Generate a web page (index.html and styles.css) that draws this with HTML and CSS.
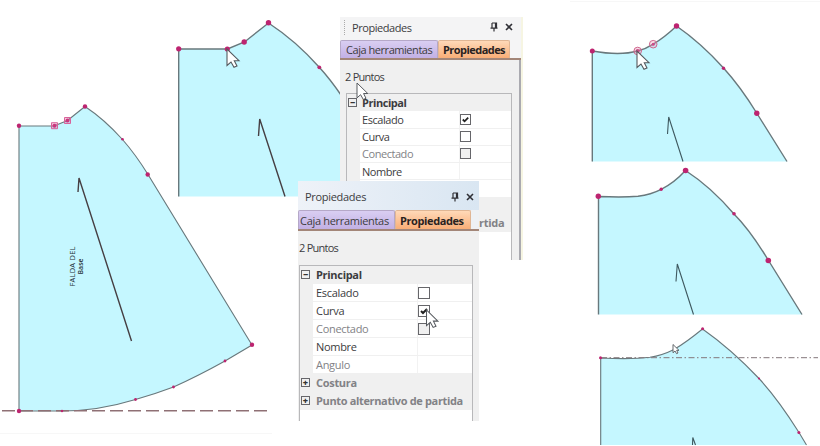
FILE: index.html
```html
<!DOCTYPE html>
<html lang="es">
<head>
<meta charset="utf-8">
<title>Propiedades</title>
<link rel="stylesheet" href="styles.css">
</head>
<body>
<main class="canvas">
  <svg class="drawing" viewBox="0 0 820 446">
    <!-- full skirt piece -->
    <path class="haze" d="M0 433.500H272M570 1.500H820"/>
    <path class="piece" d="M19 126H54L67.500 120.500L85 106.500Q104 119 122.500 139.500Q136 155 148 174.500L252 345L225 361Q198 376 173.500 387Q155 394 135.500 399.500Q98 411 62 411H19Z"/>
    <path class="baseline" d="M2 410.700H272"/>
    <path class="grain" d="M78 192L79 178L131.500 341"/>
    <g class="dots">
      <circle cx="19" cy="125.700" r="2.200"/><circle cx="85" cy="106.500" r="2.200"/><circle cx="122.500" cy="139.200" r="1.300"/><circle cx="147.700" cy="174.500" r="2.200"/><circle cx="252" cy="344.700" r="2.200"/><circle cx="225" cy="361" r="1.400"/><circle cx="173.500" cy="387" r="1.400"/><circle cx="135.500" cy="399.500" r="1.400"/><circle cx="62" cy="411" r="1.200"/><circle cx="19" cy="411" r="2.200"/><circle cx="54.500" cy="125.700" r="2"/><circle cx="67.500" cy="120.500" r="2"/>
    </g>
    <path class="selection" d="M51.500 122.700h6v6h-6zM64.500 117.500h6v6h-6z"/>
    <text class="label" transform="translate(75.300 286.500) rotate(-90)" textLength="40">FALDA DEL</text>
    <text class="label label-bold" transform="translate(83 274.500) rotate(-90)" textLength="16">Base</text>

    <!-- close-up with corner points -->
    <path class="fill" d="M178.500 49H227L244.500 42L268.500 23Q296 41 319.500 67.500Q330 79 340 94V196.500H178.500Z"/>
    <path class="edge edge-thick" d="M178.700 196.500V49H227.500L244.500 42L268.500 23Q296 41 319.500 67.500Q330 79 341 95"/>
    <path class="grain" d="M258.500 136L259.700 119L285 196.500"/>
    <g class="dots">
      <circle cx="178.700" cy="48.800" r="2.600"/><circle cx="227.300" cy="49" r="2.600"/><circle cx="244.200" cy="42" r="2.700"/><circle cx="268.500" cy="22.800" r="2.700"/><circle cx="319.300" cy="67.300" r="1.900"/>
    </g>

    <!-- close-up with curve points selected -->
    <path class="fill" d="M592 51Q620 56 637.500 51Q646 49 653.200 44.200Q665 37 676.500 26Q701 43 723.500 68Q740 86 757 113.500L787 161.500H592Z"/>
    <path class="edge edge-thick" d="M592.300 161.500V51Q620 56 637.500 51Q646 49 653.200 44.200Q665 37 676.500 26Q701 43 723.500 68Q740 86 757 113.500L787 161.500"/>
    <path class="grain grain-thin" d="M667.500 134L668.700 117L683 161.500"/>
    <g class="dots">
      <circle cx="592.300" cy="51" r="2.500"/><circle cx="676.500" cy="26" r="2.700"/><circle cx="723.500" cy="68.200" r="1.700"/><circle cx="756.800" cy="113.300" r="2.700"/><circle cx="637.700" cy="51" r="2"/><circle cx="653.200" cy="44.200" r="1.500"/>
    </g>
    <circle class="ring" cx="637.700" cy="51" r="3.800"/><circle class="ring" cx="653.200" cy="44.200" r="3.800"/>

    <!-- close-up with a single curve point -->
    <path class="fill" d="M598.500 196.500Q623 197.500 638 196.300Q651 194.500 661.200 189.300Q674 183 685.500 170.500Q711 187 734 214Q750 230 768.500 260.500L802 314.500H598.500Z"/>
    <path class="edge edge-thick" d="M598.500 314.500V196.500Q623 197.500 638 196.300Q651 194.500 661.200 189.300Q674 183 685.500 170.500Q711 187 734 214Q750 230 768.500 260.500L802 314.500"/>
    <path class="grain grain-thin" d="M676 281.500L677.300 264L693.500 314.500"/>
    <g class="dots">
      <circle cx="598.300" cy="196.300" r="2.700"/><circle cx="661.200" cy="189.300" r="1.700"/><circle cx="685.600" cy="170.500" r="2.800"/><circle cx="734" cy="213.800" r="1.800"/><circle cx="768.300" cy="260.500" r="2.800"/>
    </g>

    <!-- reshaped waist over its guide line -->
    <path class="fill" d="M600.500 358Q632 359.500 650 357.300Q662 355.500 674 349.500Q686 342.500 702.500 329Q731 349 759 378.500Q778 399 799 432.500L806.500 445H600.500Z"/>
    <path class="edge" d="M600.700 445V358Q632 359.500 650 357.300Q662 355.500 674 349.500Q686 342.500 702.500 329Q731 349 759 378.500Q778 399 799 432.500L806.500 445"/>
    <path class="guide" d="M601 357.700H818"/>
    <path class="grain grain-thin" d="M692.500 445L692.800 437.500L695.500 445"/>
    <g class="dots">
      <circle cx="600.500" cy="357.700" r="1.500"/><circle cx="702.600" cy="328.700" r="1.500"/><circle cx="759" cy="378.500" r="1.100"/><circle cx="798.900" cy="432.500" r="1.500"/>
    </g>
  </svg>

  <section class="panel panel-back">
    <header class="titlebar"><i class="grip"></i><span class="title">Propiedades</span>
      <svg class="pin" viewBox="0 0 8 10"><path d="M2 1H6.500V6M2 1V6M5.500 1V6M.5 6.200H7.500M4 6V9.500"/></svg>
      <svg class="close" viewBox="0 0 8 8"><path d="M1 1L7 7M7 1L1 7"/></svg></header>
    <nav class="tabs"><span class="tab tab-tools">Caja herramientas</span><span class="tab tab-props">Propiedades</span></nav>
    <div class="body">
      <p class="count">2 Puntos</p>
      <div class="grid">
        <div class="row group"><b class="toggle">−</b><span>Principal</span></div>
        <div class="row"><span class="name">Escalado</span><span class="value"><i class="box"><svg viewBox="0 0 10 10"><path d="M2 5L4 7L8 3"/></svg></i></span></div>
        <div class="row"><span class="name">Curva</span><span class="value"><i class="box"></i></span></div>
        <div class="row dim"><span class="name">Conectado</span><span class="value"><i class="box box-off"></i></span></div>
        <div class="row"><span class="name">Nombre</span><span class="value"></span></div>
        <div class="row"></div>
        <div class="row group"></div>
        <div class="row group dim tail">rtida</div>
      </div>
    </div>
  </section>

  <section class="panel panel-front">
    <header class="titlebar"><span class="title">Propiedades</span>
      <svg class="pin" viewBox="0 0 8 10"><path d="M2 1H6.500V6M2 1V6M5.500 1V6M.5 6.200H7.500M4 6V9.500"/></svg>
      <svg class="close" viewBox="0 0 8 8"><path d="M1 1L7 7M7 1L1 7"/></svg></header>
    <nav class="tabs"><span class="tab tab-tools">Caja herramientas</span><span class="tab tab-props">Propiedades</span></nav>
    <div class="body">
      <p class="count">2 Puntos</p>
      <div class="grid">
        <div class="row group"><b class="toggle">−</b><span>Principal</span></div>
        <div class="row"><span class="name">Escalado</span><span class="value"><i class="box"></i></span></div>
        <div class="row"><span class="name">Curva</span><span class="value"><i class="box"><svg viewBox="0 0 10 10"><path d="M2 5L4 7L8 3"/></svg></i></span></div>
        <div class="row dim"><span class="name">Conectado</span><span class="value"><i class="box box-off"></i></span></div>
        <div class="row"><span class="name">Nombre</span><span class="value"></span></div>
        <div class="row dim"><span class="name">Angulo</span><span class="value"></span></div>
        <div class="row group dim"><b class="toggle">+</b><span>Costura</span></div>
        <div class="row group dim"><b class="toggle">+</b><span class="long">Punto alternativo de partida</span></div>
      </div>
    </div>
  </section>

  <svg class="drawing" viewBox="0 0 820 446">
    <defs><path id="arrow" d="M0 0V16.500L4 13L7 18.300L10 17L7.300 11.700H12Z"/></defs>
    <g class="pointers">
      <use href="#arrow" x="227" y="49"/>
      <use href="#arrow" x="637" y="51"/>
      <use href="#arrow" transform="translate(357 83) scale(.9)"/>
      <use href="#arrow" transform="translate(426.500 310) scale(.95)"/>
      <use class="pointer-small" href="#arrow" transform="translate(673 344.500) scale(.5)"/>
    </g>
  </svg>
</main>
</body>
</html>
```
FILE: styles.css
```css
* { box-sizing: border-box; }
body { margin: 0; background: #fff; font-family: "Open Sans", "Noto Sans", sans-serif; }
.canvas { position: relative; width: 820px; height: 446px; overflow: hidden; }
.drawing { position: absolute; left: 0; top: 0; width: 820px; height: 446px; }

.piece { fill: #c5f7ff; stroke: #68787c; stroke-width: 1.1; }
.fill { fill: #c5f7ff; }
.edge { fill: none; stroke: #68787c; stroke-width: 1.1; }
.edge-thick { stroke-width: 1.4; }
.haze { stroke: #f7f7f7; stroke-width: 1; }
.baseline { stroke: #8f7075; stroke-width: 1.4; stroke-dasharray: 13 5; }
.guide { stroke: #83777a; stroke-width: 1; stroke-dasharray: 6 2.500 1.500 2.500; }
.grain { fill: none; stroke: #463f43; stroke-width: 1.4; }
.grain-thin { stroke: #3f5960; stroke-width: 1.1; }
.dots { fill: #bd2470; }
.selection { fill: #e45c9b55; stroke: #d8639b; stroke-width: 1; }
.ring { fill: #ee9ab855; stroke: #cf668e; stroke-width: 1; }
.label { font-size: 7.5px; fill: #263238; }
.label-bold { font-size: 6.8px; font-weight: 600; }
.pointers { fill: #fff; stroke: #55595e; stroke-width: 1.1; }
.pointer-small { stroke-width: 1.8; }

.panel { position: absolute; display: flex; flex-direction: column; background: #f0f0f0; color: #3c3c40; font-size: 11px; white-space: nowrap; overflow: hidden; }
.panel-back { left: 340px; top: 17px; width: 183px; height: 243px; --row: 17.250px; --toggle: 15px; --name: 97px; letter-spacing: -.45px; border-right: 2px solid #f6f5e2; }
.panel-front { left: 298px; top: 181px; width: 181px; height: 240px; --row: 18px; --toggle: 16px; --name: 101px; letter-spacing: -.3px; }

.titlebar { display: flex; align-items: center; padding-right: 9px; background: #f4f4f5; }
.panel-back .titlebar { height: 23px; padding: 0 8px 3px 4px; }
.panel-front .titlebar { height: 29px; padding: 2px 5px 0 7px; background: linear-gradient(90deg, #eef2f8, #d9e6f2); }
.grip { width: 1px; height: 15px; margin-right: 7px; border-left: 1px dotted #aaa; }
.title { flex: 1; }
.pin { width: 8px; height: 10px; margin-right: 7px; }
.close { width: 8px; height: 8px; }
.pin path, .close path { fill: none; stroke: #303036; stroke-width: 1.2; }
.close path { stroke-width: 1.6; }

.tabs { display: flex; height: 20px; border-bottom: 2px solid #a38678; background: #f5f5f6; }
.panel-front .tabs { height: 21px; background: #eef1f4; }
.tab { display: flex; align-items: center; border: 1px solid #b5a8c8; border-bottom: 0; border-radius: 2px 2px 0 0; }
.tab-tools { width: 98px; padding-left: 5px; background: linear-gradient(#d9cef2, #c2b0e4); }
.tab-props { width: 72px; padding-left: 4px; border-color: #e0b694; background: linear-gradient(#ffd9b8, #f9ae77); color: #29221f; font-weight: 700; letter-spacing: -.55px; }
.panel-front .tab-tools { width: 97px; padding-left: 1px; }
.panel-front .tab-props { width: 76px; letter-spacing: -.4px; }

.body { flex: 1; display: flex; flex-direction: column; }
.panel-back .body { padding: 0 7px 0 6px; border-right: 2px solid #aaaab0; }
.panel-front .body { padding: 0 6px 0 1px; }
.count { margin: 0; height: 33px; line-height: 33px; letter-spacing: -.75px; }
.panel-back .count { margin-left: -1px; }
.panel-front .count { height: 34px; line-height: 34px; }
.grid { flex: 1; border: 1px solid #b8b8ba; border-bottom: 0; background: #fff; }
.row { display: flex; align-items: center; height: var(--row); padding-left: var(--toggle); border-bottom: 1px solid #f0f0f0; background: linear-gradient(90deg, #f0f0f0 13px, #fff 13px); }
.group { padding-left: 0; background: #f0f0f0; font-weight: 700; }
.panel .tail { padding-left: 132px; letter-spacing: -.3px; }
.dim { color: #828286; }
.name { width: var(--name); }
.value { flex: 1; display: flex; align-items: center; height: 100%; border-left: 1px solid #f2f2f2; }
.long { letter-spacing: -.35px; }
.toggle { display: flex; align-items: center; justify-content: center; width: 9px; height: 9px; margin: 0 calc(var(--toggle) - 10px) 0 1px; border: 1px solid #66666a; color: #333; font-size: 9px; line-height: 1; letter-spacing: 0; }
.box { width: 11px; height: 11px; border: 1.5px solid #66666a; background: #fff; }
.panel-front .box { width: 12px; height: 12px; margin-left: 0; }
.box-off { background: #f0f0f0; }
.box svg { display: block; width: 100%; height: 100%; }
.box path { fill: none; stroke: #222; stroke-width: 2; }
```
